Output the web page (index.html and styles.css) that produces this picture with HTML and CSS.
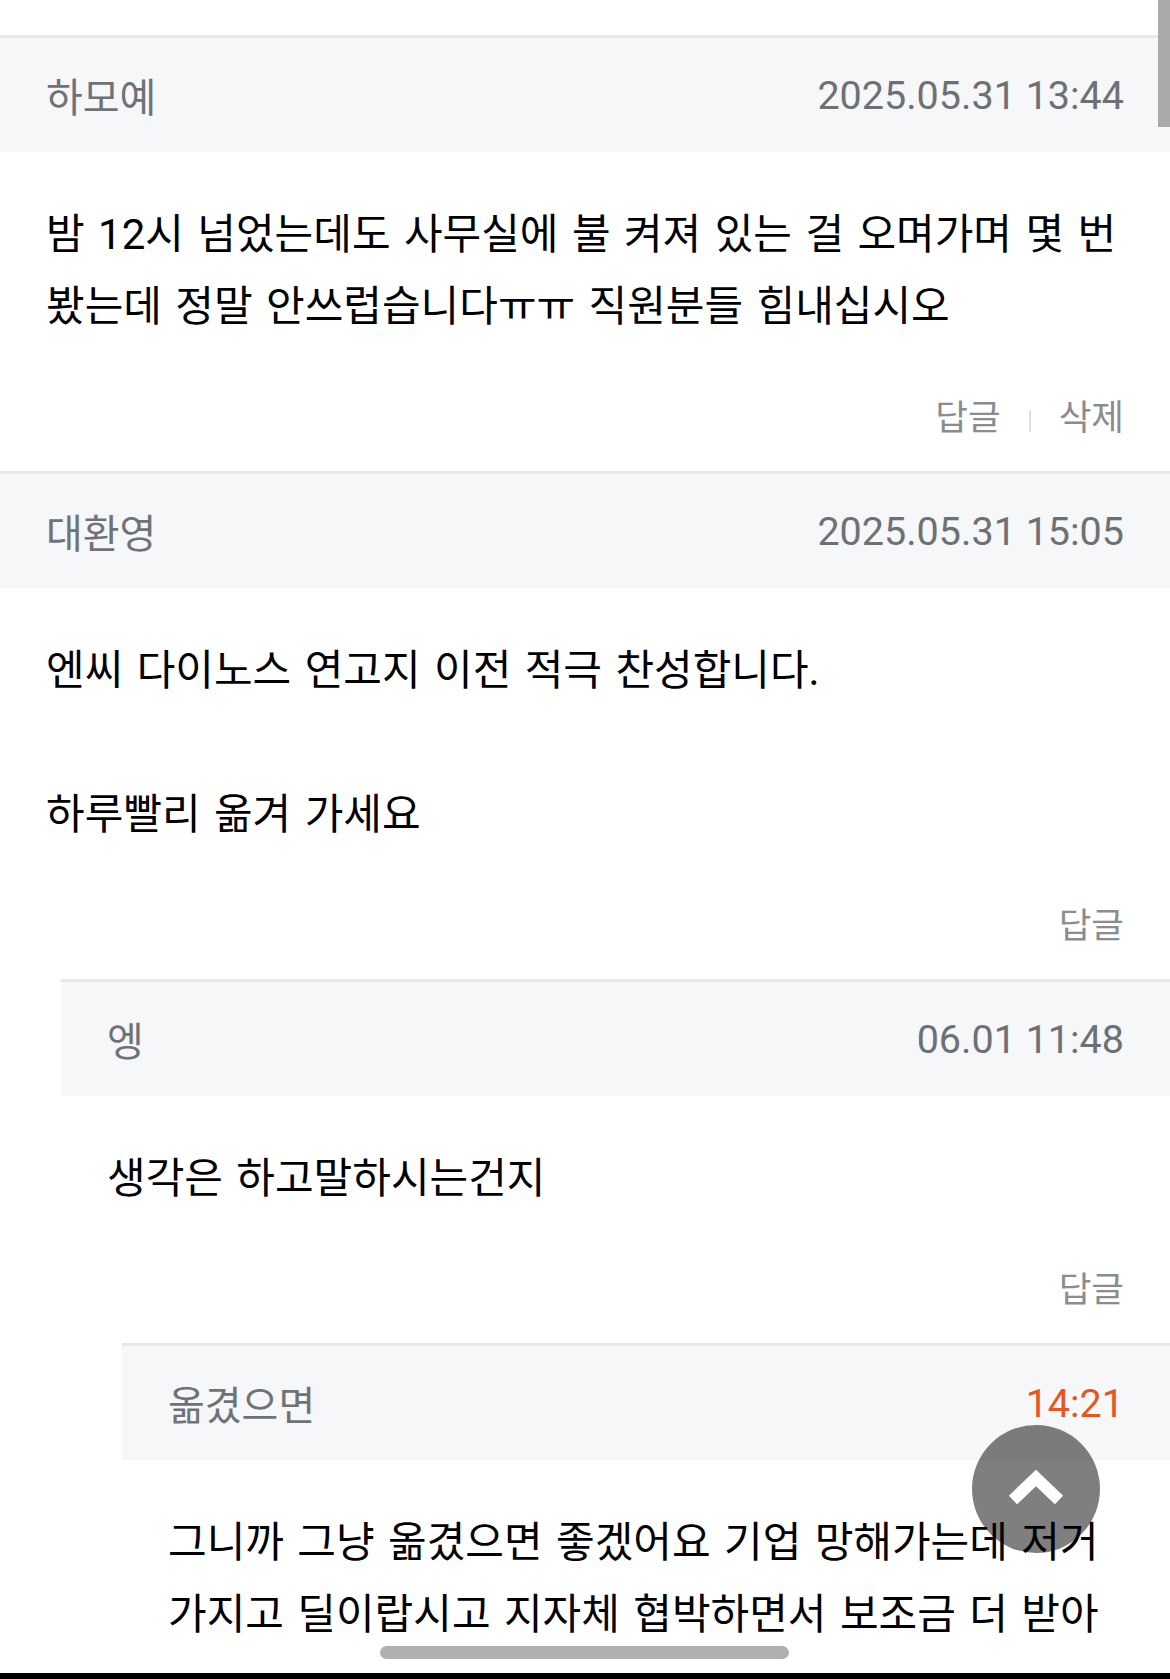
FILE: index.html
```html
<!DOCTYPE html>
<html lang="ko">
<head>
<meta charset="UTF-8" />
<meta name="viewport" content="width=device-width, initial-scale=1.0" />
<title>댓글</title>
<link rel="stylesheet" href="styles.css">
</head>
<body>
<div class="screen">
  <div class="list">
    <div class="top-gap"></div>

    <div class="comment">
      <div class="head">
        <span class="name">하모예</span>
        <span class="date">2025.05.31 13:44</span>
      </div>
      <p class="text">밤 12시 넘었는데도 사무실에 불 켜져 있는 걸 오며가며 몇 번 봤는데 정말 안쓰럽습니다ㅠㅠ 직원분들 힘내십시오</p>
      <div class="actions">
        <a class="act">답글</a>
        <span class="sep"></span>
        <a class="act">삭제</a>
      </div>
    </div>

    <div class="comment">
      <div class="head">
        <span class="name">대환영</span>
        <span class="date">2025.05.31 15:05</span>
      </div>
      <p class="text">엔씨 다이노스 연고지 이전 적극 찬성합니다.<br><br>하루빨리 옮겨 가세요</p>
      <div class="actions">
        <a class="act">답글</a>
      </div>

      <div class="replies">
        <div class="comment">
          <div class="head">
            <span class="name">엥</span>
            <span class="date">06.01 11:48</span>
          </div>
          <p class="text">생각은 하고말하시는건지</p>
          <div class="actions">
            <a class="act">답글</a>
          </div>

          <div class="replies">
            <div class="comment">
              <div class="head">
                <span class="name">옮겼으면</span>
                <span class="date new">14:21</span>
              </div>
              <p class="text">그니까 그냥 옮겼으면 좋겠어요 기업 망해가는데 저거 가지고 딜이랍시고 지자체 협박하면서 보조금 더 받아</p>
            </div>
          </div>
        </div>
      </div>
    </div>
  </div>

  <div class="scrollbar"></div>

  <button class="to-top" type="button" aria-label="맨 위로">
    <svg width="128" height="128" viewBox="0 0 128 128">
      <polyline points="41,75 64,53 87,75" fill="none" stroke="#fff" stroke-width="12" stroke-linejoin="miter" />
    </svg>
  </button>

  <div class="home-bar"></div>
  <div class="bottom-edge"></div>
</div>
</body>
</html>
```

FILE: styles.css
```css
* {
box-sizing: border-box;
}
body {
margin: 0;
background: #fff;
font-family: Roboto, "Noto Sans CJK KR", sans-serif;
color: #111;
}
.screen {
position: relative;
width: 1170px;
height: 1679px;
overflow: hidden;
background: #fff;
}
.top-gap {
height: 35px;
}
.comment {
border-top: 3px solid #e6e8ea;
}
.head {
display: flex;
align-items: center;
justify-content: space-between;
height: 114px;
padding: 0 46px;
background: #f6f7f8;
}
.name {
font-size: 40px;
color: #6f7276;
}
.date {
font-size: 39.5px;
color: #6d7074;
}
.date.new {
color: #e8561f;
}
.text {
margin: 0;
padding: 47px 46px 0;
font-size: 42px;
line-height: 72px;
word-spacing: 3px;
word-break: keep-all;
color: #000;
}
.actions {
display: flex;
justify-content: flex-end;
align-items: center;
margin-top: 55px;
padding: 0 46px 33px;
height: 73px;
}
.act {
font-size: 35.5px;
line-height: 40px;
color: #8a8c8f;
}
.sep {
width: 2px;
height: 22px;
margin: 6px 28px 0;
background: #dedfe0;
}
.replies {
margin-left: 61px;
}
.scrollbar {
position: absolute;
top: 0;
right: 0;
width: 12px;
height: 127px;
background: #aaaaab;
}
.to-top {
position: absolute;
left: 972px;
top: 1425px;
width: 128px;
height: 128px;
padding: 0;
border: 0;
border-radius: 50%;
background: rgba(0, 0, 0, 0.5);
}
.to-top svg {
display: block;
}
.home-bar {
position: absolute;
left: 380px;
top: 1646px;
width: 409px;
height: 13px;
border-radius: 7px;
background: #b0b0b0;
}
.bottom-edge {
position: absolute;
left: 0;
right: 0;
bottom: 0;
height: 6px;
background: #000;
}
```
